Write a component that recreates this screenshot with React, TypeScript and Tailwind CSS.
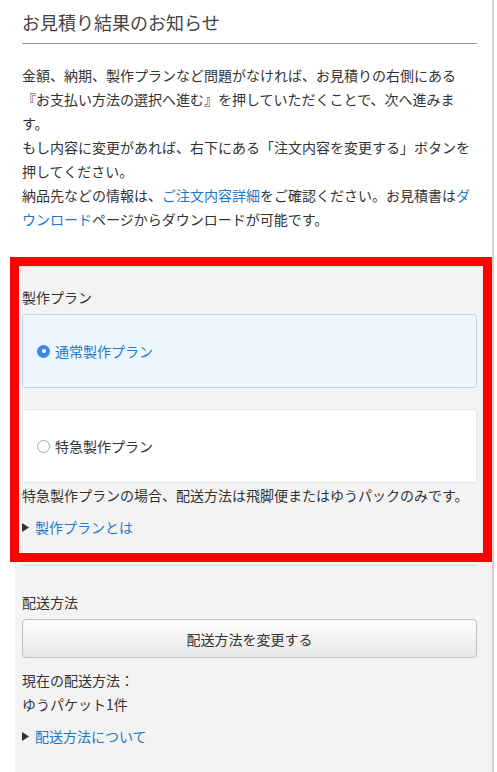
import React from 'react';

const Triangle: React.FC = () => (
  <svg width="7" height="9" viewBox="0 0 7 9" className="shrink-0">
    <polygon points="0,0 7,4.5 0,9" fill="#333333" />
  </svg>
);

const Radio: React.FC<{ checked: boolean }> = ({ checked }) =>
  checked ? (
    <span className="flex h-[13px] w-[13px] shrink-0 items-center justify-center rounded-full bg-[#3d86ef]">
      <span className="h-[4px] w-[4px] rounded-full bg-white" />
    </span>
  ) : (
    <span className="h-[13px] w-[13px] shrink-0 rounded-full border border-[#a8a8a8] bg-white" />
  );

interface PlanOptionProps {
  label: string;
  checked: boolean;
}

const PlanOption: React.FC<PlanOptionProps> = ({ label, checked }) => (
  <label
    className={`flex h-[74px] items-center gap-[5px] rounded-[3px] border pl-[14px] ${
      checked ? 'border-[#bcd5ee] bg-[#eef6fd] text-[#1f78c8]' : 'border-[#e6e6e6] bg-white text-[#333]'
    }`}
  >
    <Radio checked={checked} />
    <span>{label}</span>
  </label>
);

const DisclosureLink: React.FC<{ text: string }> = ({ text }) => (
  <div className="flex items-center gap-[6px]">
    <Triangle />
    <a className="text-[#1f78c8]">{text}</a>
  </div>
);

export default function App() {
  return (
    <div
      className="min-h-screen w-[494px] border-r-2 border-[#d2d2d2] bg-white text-[14px] leading-[24px] text-[#333]"
      style={{ fontFamily: '"Noto Sans CJK JP", "Noto Sans", sans-serif' }}
    >
      {/* notice */}
      <div className="px-[22px] pr-[15px] pb-[35px]">
        <h2 className="border-b border-[#9a9a9a] pt-[10px] pb-[8px] text-[18px] leading-[25px] text-[#444]">
          お見積り結果のお知らせ
        </h2>
        <p className="mt-[19px]">
          金額、納期、製作プランなど問題がなければ、お見積りの右側にある『お支払い方法の選択へ進む』を押していただくことで、次へ進みます。
          <br />
          もし内容に変更があれば、右下にある「注文内容を変更する」ボタンを押してください。
          <br />
          納品先などの情報は、<a className="text-[#1f78c8]">ご注文内容詳細</a>をご確認ください。お見積書は
          <a className="text-[#1f78c8]">ダウンロード</a>ページからダウンロードが可能です。
        </p>
      </div>

      <div className="ml-[15px] bg-[#f3f3f3] pb-[30px]">
        {/* plan */}
        <section className="relative border-t border-[#dcdcdc] pt-[18px] pb-[26px] pl-[7px] pr-[15px]">
          <div>製作プラン</div>
          <div className="mt-[5px] flex flex-col gap-[21px]">
            <PlanOption label="通常製作プラン" checked />
            <PlanOption label="特急製作プラン" checked={false} />
          </div>
          <p>特急製作プランの場合、配送方法は飛脚便またはゆうパックのみです。</p>
          <div className="mt-[8px]">
            <DisclosureLink text="製作プランとは" />
          </div>
          <div className="pointer-events-none absolute -top-[10px] -left-[5px] right-0 bottom-[3px] border-[9px] border-[#ff0000]" />
        </section>

        {/* delivery */}
        <section className="pl-[7px] pr-[15px]">
          <div className="h-px bg-[#dcdcdc]" />
          <div className="mt-[24px]">配送方法</div>
          <button className="mt-[5px] flex h-[39px] w-full items-center justify-center rounded-[4px] border border-[#bdbdbd] bg-gradient-to-b from-[#fdfdfd] to-[#e9e9e9] text-[#333]">
            配送方法を変更する
          </button>
          <div className="mt-[10px]">現在の配送方法：</div>
          <div>ゆうパケット1件</div>
          <div className="mt-[8px]">
            <DisclosureLink text="配送方法について" />
          </div>
        </section>
      </div>
    </div>
  );
}
